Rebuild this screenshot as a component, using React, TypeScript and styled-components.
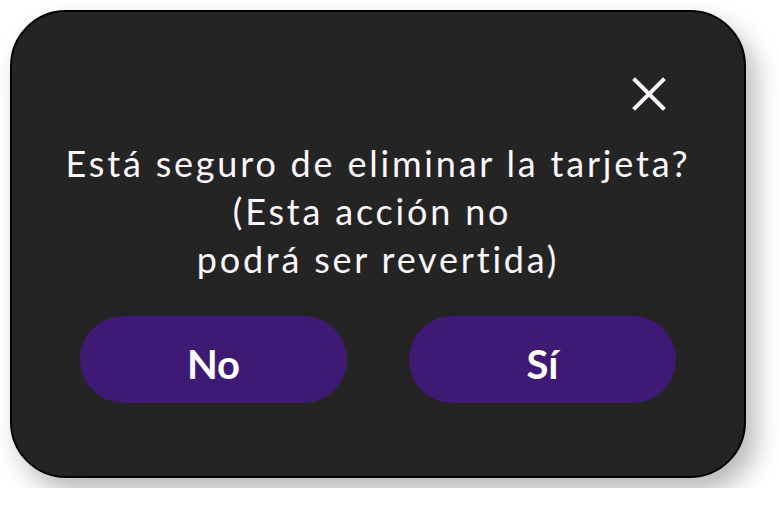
import React from 'react';
import styled, { createGlobalStyle } from 'styled-components';

const GlobalStyle = createGlobalStyle`
    html, body {
        margin: 0;
        padding: 0;
        background: #ffffff;
    }
    body {
        font-family: Lato, "Noto Sans", sans-serif;
    }
`;

const Page = styled.div`
    padding: 10px;
    width: 736px;
`;

const Card = styled.div`
    box-sizing: border-box;
    width: 736px;
    height: 468px;
    background: #242424;
    border: 2px solid #000;
    border-radius: 56px;
    box-shadow: 10px 14px 26px rgba(0, 0, 0, 0.28);
    display: flex;
    flex-direction: column;
    padding: 65px 0 73px;
`;

const CloseRow = styled.div`
    display: flex;
    justify-content: flex-end;
    padding-right: 78px;
`;

const CloseButton = styled.button`
    border: none;
    background: none;
    padding: 0;
    width: 34px;
    height: 34px;
    cursor: pointer;
    display: flex;
    align-items: center;
    justify-content: center;
`;

const Message = styled.p`
    margin: 28px 0 0;
    color: #fbf6fb;
    font-size: 36px;
    line-height: 48px;
    letter-spacing: 2.8px;
    text-align: center;
    white-space: pre;
`;

const Actions = styled.div`
    margin-top: auto;
    display: flex;
    gap: 62px;
    padding: 0 68px;
`;

const ActionButton = styled.button`
    flex: 0 0 267px;
    height: 87px;
    border: none;
    border-radius: 44px;
    background: #3f1a74;
    color: #ffffff;
    font-family: Lato, "Noto Sans", sans-serif;
    font-weight: 700;
    font-size: 40px;
    padding: 9px 0 0;
    cursor: pointer;
`;

const CloseIcon = () => (
    <svg width="34" height="34" viewBox="0 0 34 34">
        <path d="M3 3 L31 31 M31 3 L3 31" stroke="#fbf3fb" strokeWidth="4" strokeLinecap="square" />
    </svg>
);

export default function App() {
    return (
        <Page>
            <GlobalStyle />
            <Card>
                <CloseRow>
                    <CloseButton aria-label="Cerrar">
                        <CloseIcon />
                    </CloseButton>
                </CloseRow>
                <Message>{'Está seguro de eliminar la tarjeta?\n(Esta acción no \npodrá ser revertida)'}</Message>
                <Actions>
                    <ActionButton>No</ActionButton>
                    <ActionButton>Sí</ActionButton>
                </Actions>
            </Card>
        </Page>
    );
}
